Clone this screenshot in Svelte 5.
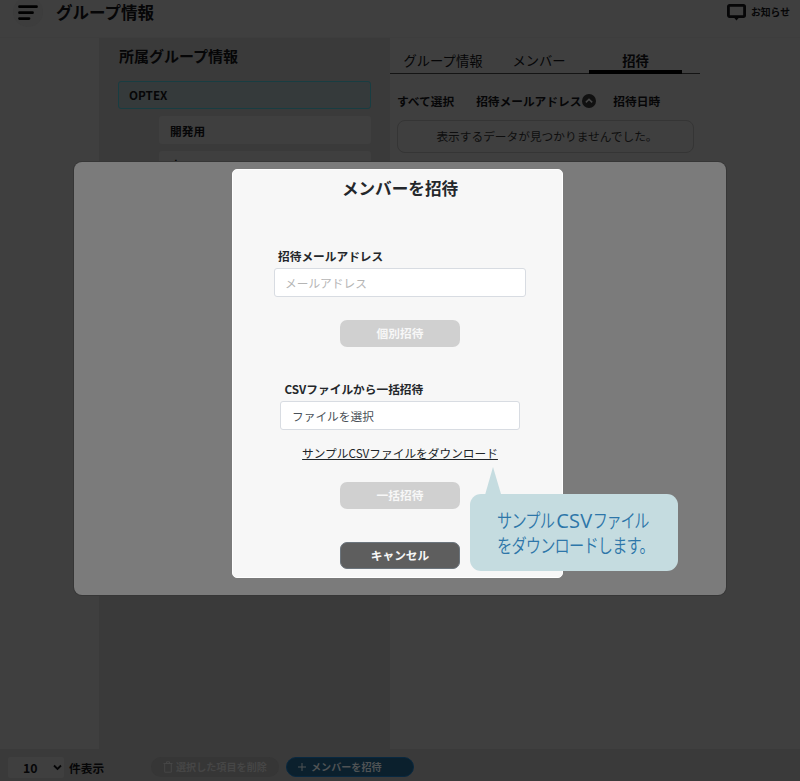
<script>
    const tabs = ["グループ情報", "メンバー", "招待"];
    const pageSizes = [10, 20, 50];

    let activeTab = $state("招待");
    let pageSize = $state(10);
    let email = $state("");
</script>

<div class="page">
    <header>
        <button class="menu" aria-label="menu">
            <svg width="20" height="16" viewBox="0 0 20 16">
                <path d="M1.5 1.7h17M1.5 7.7h13M1.5 13.6h9.5" />
            </svg>
        </button>
        <h1>グループ情報</h1>
        <a class="news" href="#news">
            <svg width="19" height="17" viewBox="0 0 19 17">
                <path
                    d="M2.7 1.4h13.6a1.3 1.3 0 0 1 1.3 1.3v8.6a1.3 1.3 0 0 1-1.3 1.3H2.7a1.3 1.3 0 0 1-1.3-1.3V2.7a1.3 1.3 0 0 1 1.3-1.3z"
                />
                <path class="tip" d="M6.3 12.8h6.4l-3.2 3.8z" />
            </svg>
            お知らせ
        </a>
    </header>

    <div class="columns">
        <nav></nav>
        <section class="groups">
            <h2>所属グループ情報</h2>
            <div class="group selected">OPTEX</div>
            <div class="group child">開発用</div>
            <div class="group child last">本</div>
        </section>
        <section class="detail">
            <div class="tabs">
                {#each tabs as tab}
                    <button
                        class:active={tab === activeTab}
                        onclick={() => (activeTab = tab)}>{tab}</button
                    >
                {/each}
            </div>
            <div class="heads">
                <span class="all">すべて選択</span>
                <span class="mail">招待メールアドレス</span>
                <svg width="14" height="14" viewBox="0 0 14 14">
                    <circle cx="7" cy="7" r="7" />
                    <path d="M3.8 8.4 7 5.4l3.2 3" />
                </svg>
                <span class="date">招待日時</span>
            </div>
            <div class="empty">表示するデータが見つかりませんでした。</div>
        </section>
    </div>

    <footer>
        <div class="select">
            <select bind:value={pageSize} aria-label="件表示">
                {#each pageSizes as size}
                    <option value={size}>{size}</option>
                {/each}
            </select>
            <svg width="9" height="7" viewBox="0 0 9 7">
                <path d="M1 1.5 4.5 5 8 1.5" />
            </svg>
        </div>
        <span class="unit">件表示</span>
        <button class="pill delete">
            <svg width="10" height="12" viewBox="0 0 10 12">
                <path d="M.5 2.5h9M3.5 2V.8h3V2M1.7 2.5v8.7h6.6V2.5" />
            </svg>
            選択した項目を削除
        </button>
        <button class="pill invite">
            <svg width="8" height="8" viewBox="0 0 8 8">
                <path d="M0 4h8M4 0v8" />
            </svg>
            メンバーを招待
        </button>
    </footer>

    <div class="backdrop">
        <div class="modal">
            <h3>メンバーを招待</h3>
            <label for="email">招待メールアドレス</label>
            <input id="email" bind:value={email} placeholder="メールアドレス" />
            <button class="action single" disabled>個別招待</button>
            <span class="csv-label">CSVファイルから一括招待</span>
            <div class="file">ファイルを選択</div>
            <a class="sample" href="#sample">サンプルCSVファイルをダウンロード</a>
            <button class="action bulk" disabled>一括招待</button>
            <button class="action cancel">キャンセル</button>
        </div>
        <div class="callout">
            <svg width="17" height="28" viewBox="0 0 17 28">
                <path d="M8 0 16.3 28H0z" />
            </svg>
            <p>サンプル<span class="latin">CSV</span><span class="tight">ファイル</span></p>
            <p>をダウンロードします。</p>
        </div>
    </div>
</div>

<style>
    :global(body) {
        background: #3f3f3f;
    }

    .page {
        position: relative;
        display: flex;
        flex-direction: column;
        width: 800px;
        height: 781px;
        overflow: hidden;
        color: #060607;
        background: #3f3f3f;
        font: 500 11.7px/18px "Noto Sans CJK JP", sans-serif;
    }

    .page * {
        box-sizing: border-box;
    }

    h1,
    h2,
    h3,
    p {
        margin: 0;
    }

    button,
    input,
    select {
        padding: 0;
        border: none;
        color: inherit;
        background: none;
        font: inherit;
    }

    svg {
        display: block;
        flex: none;
        fill: none;
        stroke: currentColor;
    }

    header {
        display: flex;
        height: 38px;
        padding: 0 10px 0 13px;
        align-items: flex-start;
        border-bottom: 1px solid #3d3d3d;
    }

    .menu {
        display: flex;
        width: 30px;
        height: 30px;
        margin-top: -3px;
        padding: 8px 0 0 5px;
        border-radius: 50%;
        color: #000;
        background: #3d3d3d;
    }

    .menu svg {
        stroke-width: 2.8;
        stroke-linecap: round;
    }

    h1 {
        margin-left: 13px;
        font-size: 16.5px;
        font-weight: 700;
        line-height: 24px;
    }

    .news {
        display: flex;
        gap: 5px;
        margin: 3px 0 0 auto;
        color: inherit;
        text-decoration: none;
        font-size: 9.8px;
        font-weight: 700;
    }

    .news svg {
        margin-top: 1px;
        stroke-width: 2.8;
    }

    .news .tip {
        fill: currentColor;
        stroke: none;
    }

    .columns {
        display: grid;
        flex: 1;
        grid-template-columns: 99px 291px 1fr;
    }

    .groups {
        padding: 7px 19px 0;
        background: #3a3a3a;
    }

    h2 {
        margin-bottom: 12px;
        padding: 0 0 2px 1px;
        font-size: 15px;
        font-weight: 700;
        line-height: 22px;
    }

    .group {
        height: 28px;
        margin-bottom: 7px;
        padding-left: 10px;
        border-radius: 3px;
        font-weight: 700;
        line-height: 29px;
    }

    .selected {
        border: 1px solid #183d42;
        background: #353a3b;
        line-height: 26px;
    }

    .child {
        margin-left: 41px;
        padding-left: 11px;
        background: #3f3f3f;
    }

    .last {
        line-height: 28px;
    }

    .tabs {
        display: flex;
        width: 310px;
        height: 36px;
        border-bottom: 1px solid #141414;
    }

    .tabs button {
        width: 106px;
        height: 36px;
        padding-top: 9px;
        font-size: 13.3px;
        font-weight: 400;
    }

    .tabs button:nth-child(2) {
        width: 86px;
        margin-right: 1px;
    }

    .tabs .active {
        width: 93px;
        margin-left: 6px;
        border-bottom: 4px solid #000;
        padding-top: 13px;
        font-weight: 700;
    }

    .heads {
        display: flex;
        align-items: center;
        height: 18px;
        margin: 18px 0 0 7px;
        font-weight: 700;
    }

    .mail {
        margin-left: 22px;
    }

    .heads svg {
        margin-left: 1px;
        stroke-width: 1.5;
    }

    .heads circle {
        fill: #101010;
        stroke: none;
    }

    .heads path {
        stroke: #454545;
    }

    .date {
        margin-left: 17px;
    }

    .empty {
        width: 297px;
        height: 33px;
        margin: 10px 0 0 7px;
        padding-left: 3px;
        border: 1px solid #353535;
        border-radius: 8px;
        color: #0e0e0e;
        font-weight: 400;
        line-height: 30px;
        text-align: center;
    }

    footer {
        display: flex;
        align-items: flex-start;
        height: 32px;
        padding: 8px 0 0 8px;
        background: #3a3a3a;
    }

    .select {
        display: flex;
        align-items: center;
        width: 56px;
        height: 21px;
        padding-left: 15px;
        border-radius: 2px;
        background: #3f3f3f;
    }

    select {
        width: 30px;
        appearance: none;
        font-size: 12.3px;
        font-weight: 700;
    }

    .select svg {
        stroke-width: 1.8;
    }

    .unit {
        width: 35px;
        margin: 2px 47px 0 5px;
        font-weight: 700;
        white-space: nowrap;
    }

    .pill {
        display: flex;
        align-items: center;
        width: 128px;
        height: 20px;
        padding-left: 12px;
        gap: 3px;
        border-radius: 10px;
        color: #464646;
        background: #363636;
        font-size: 10.1px;
        font-weight: 700;
        white-space: nowrap;
    }

    .invite {
        margin-left: 7px;
        padding-left: 11px;
        gap: 5px;
        border: 1px solid #082840;
        background: #0b202d;
        color: #4f5355;
    }

    .backdrop {
        position: absolute;
        top: 162px;
        left: 74px;
        display: flex;
        width: 652px;
        height: 433px;
        padding: 7px 0 0 158px;
        border-radius: 8px;
        background: #7b7b7b;
        box-shadow: 0 0 0 1px #363636;
    }

    .modal {
        display: flex;
        flex-direction: column;
        align-items: center;
        width: 331px;
        height: 409px;
        padding-left: 5px;
        border: 1px solid #fff;
        border-radius: 5px;
        color: #24272b;
        background: #f7f7f7;
    }

    h3 {
        margin: 5px 0 46px;
        font-size: 16.6px;
        font-weight: 700;
        line-height: 26px;
    }

    label,
    .csv-label {
        width: 244px;
        font-weight: 700;
    }

    .csv-label {
        width: 231px;
    }

    input,
    .file {
        flex: none;
        width: 252px;
        height: 29px;
        margin-top: 3px;
        padding: 0 10px;
        border: 1px solid #d8dce2;
        border-radius: 3px;
        color: #495057;
        background: #fff;
        font-weight: 400;
        line-height: 27px;
    }

    .file {
        width: 240px;
        padding: 0 11px;
    }

    input::placeholder {
        color: #b5b5b5;
        opacity: 1;
    }

    .action {
        flex: none;
        width: 120px;
        height: 27px;
        padding-bottom: 1px;
        border-radius: 7px;
        color: #f7f7f7;
        background: #d0d0d0;
        font-weight: 700;
    }

    .single {
        margin: 23px 0 33px;
    }

    .sample {
        margin-top: 14px;
        color: #212529;
        font-weight: 400;
        text-decoration: underline;
    }

    .bulk {
        margin: 20px 0 33px;
    }

    .cancel {
        border: 1px solid #6c757d;
        background: #5e5e5e;
    }

    .callout {
        position: absolute;
        top: 332px;
        left: 396px;
        width: 208px;
        height: 77px;
        padding: 14px 0 0 27px;
        border-radius: 11px;
        color: #2d76a9;
        background: #c5dce0;
        font-size: 19px;
        font-weight: 350;
        line-height: 24px;
        white-space: nowrap;
    }

    .callout svg {
        position: absolute;
        top: -27px;
        left: 15px;
        fill: #c5dce0;
        stroke: none;
    }

    /* narrow kana, full-width latin */
    .callout p {
        width: max-content;
        height: 25px;
        letter-spacing: -1px;
        transform: scaleX(0.8);
        transform-origin: left;
    }

    .latin {
        display: inline-block;
        margin: 0 9px 0 3px;
        font-family: "Open Sans", sans-serif;
        font-size: 20px;
        font-weight: 400;
        line-height: 20px;
        letter-spacing: 0.3px;
        transform: scaleX(1.25);
        transform-origin: left;
    }

    .tight {
        letter-spacing: -1.8px;
    }
</style>
